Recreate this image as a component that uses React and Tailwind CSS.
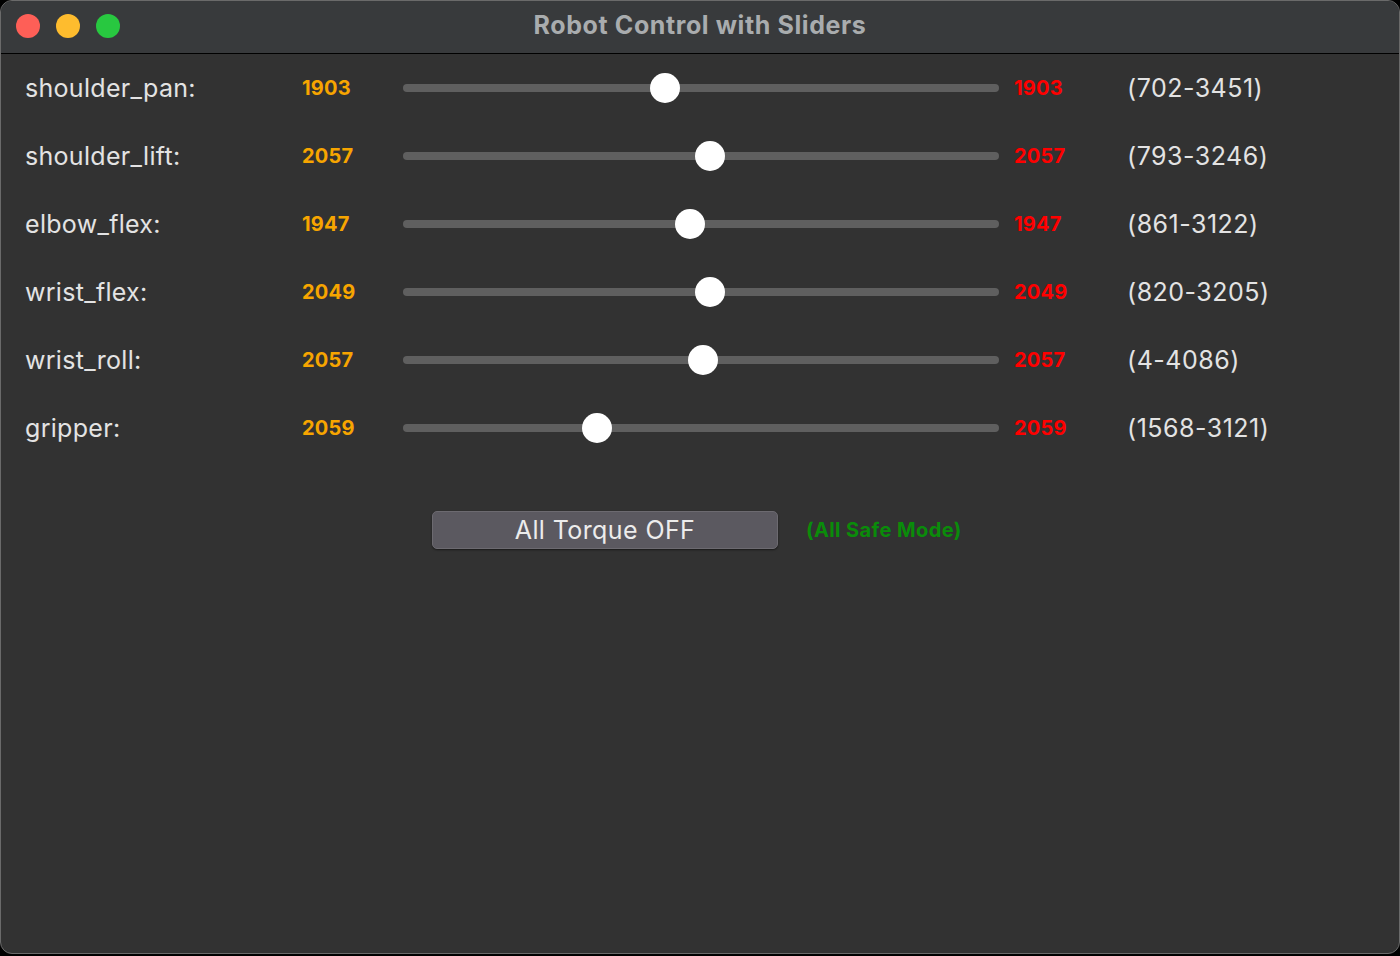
import React from "react";

const joints = [
  { name: "shoulder_pan", value: 1903, min: 702, max: 3451 },
  { name: "shoulder_lift", value: 2057, min: 793, max: 3246 },
  { name: "elbow_flex", value: 1947, min: 861, max: 3122 },
  { name: "wrist_flex", value: 2049, min: 820, max: 3205 },
  { name: "wrist_roll", value: 2057, min: 4, max: 4086 },
  { name: "gripper", value: 2059, min: 1568, max: 3121 },
];

function Slider({ value, min, max }) {
  const pct = (value - min) / (max - min);
  return (
    <div className="relative w-[596px] h-[30px] flex items-center">
      <div className="w-full h-[8px] rounded-full bg-[#5f5f5f]" />
      <div
        className="absolute top-0 w-[30px] h-[30px] rounded-full bg-white"
        style={{ left: `${pct * 566}px` }}
      />
    </div>
  );
}

export default function App() {
  return (
    <div
      className="w-[1400px] h-[956px] bg-black"
      style={{ fontFamily: "Inter, 'Noto Sans', sans-serif" }}
    >
      <div className="h-[954px] rounded-[12px] border border-[#6a6a6a] bg-[#323232] overflow-hidden flex flex-col">
        {/* Title bar */}
        <div className="relative h-[53px] shrink-0 bg-[#383a3c] border-b border-black flex items-center justify-center">
          <div className="absolute left-[15px] top-[13px] flex gap-[16px]">
            <span className="w-[24px] h-[24px] rounded-full bg-[#fe5f57]" />
            <span className="w-[24px] h-[24px] rounded-full bg-[#febc2e]" />
            <span className="w-[24px] h-[24px] rounded-full bg-[#28c840]" />
          </div>
          <h1 className="text-[25px] font-bold text-[#a9acae] tracking-[0.6px] -mt-[3px]">
            Robot Control with Sliders
          </h1>
        </div>

        {/* Rows */}
        <div className="flex flex-col">
          {joints.map((j) => (
            <div key={j.name} className="h-[68px] flex items-center pl-[24px]">
              <div className="w-[277px] text-[25px] tracking-[0.3px] text-[#e3e3e3] pt-[2px]">{j.name}:</div>
              <div className="w-[101px] text-[20px] font-bold tracking-[0.2px] text-[#f7a500]">{j.value}</div>
              <Slider value={j.value} min={j.min} max={j.max} />
              <div className="w-[128px] pl-[15px] text-[20px] font-bold tracking-[0.2px] text-[#ff0000]">{j.value}</div>
              <div className="text-[25px] tracking-[0.5px] text-[#e3e3e3] pt-[2px]">
                ({j.min}-{j.max})
              </div>
            </div>
          ))}
        </div>

        {/* Torque button */}
        <div className="mt-[49px] flex items-center pl-[431px] gap-[28px]">
          <button className="w-[346px] h-[38px] rounded-[5px] bg-[#5b5960] border border-[#6c6a70] shadow-[0_1px_2px_rgba(0,0,0,0.5)] text-[25px] tracking-[0.4px] text-[#ececec]">
            All Torque OFF
          </button>
          <span className="text-[20px] font-bold tracking-[0.4px] text-[#0a8c0a]">(All Safe Mode)</span>
        </div>
      </div>
    </div>
  );
}
